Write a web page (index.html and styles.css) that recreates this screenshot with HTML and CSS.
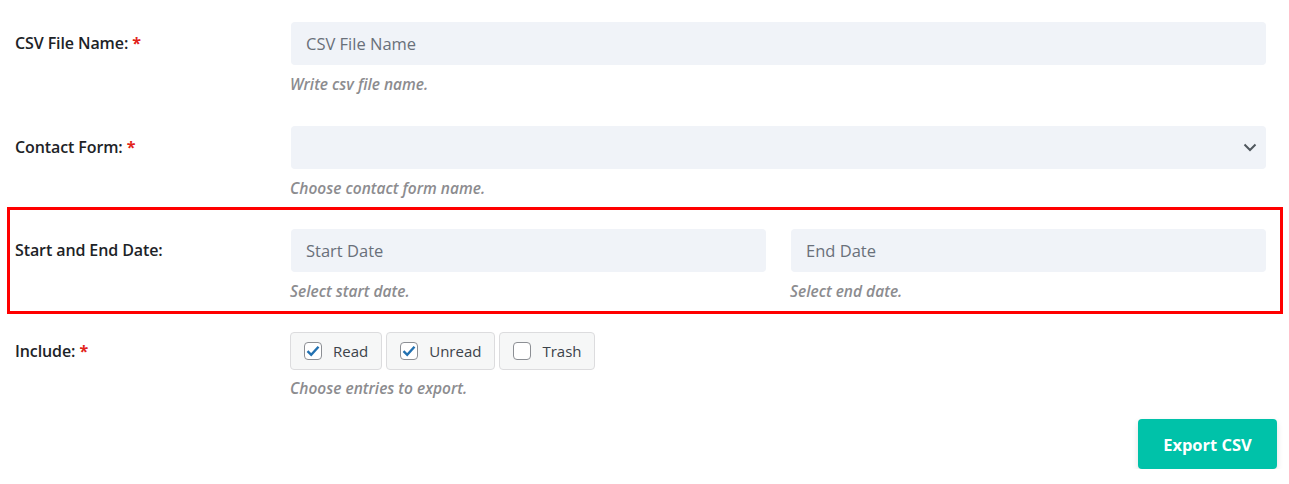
FILE: index.html
```html
<!DOCTYPE html>
<html lang="en">
<head>
<meta charset="utf-8">
<title>Export CSV</title>
<link rel="stylesheet" href="styles.css">
</head>
<body>
<form class="export-form">
  <div class="row">
    <label class="row-label">CSV File Name: <span class="req">*</span></label>
    <div class="row-field">
      <input class="text-input" type="text" placeholder="CSV File Name">
      <p class="help">Write csv file name.</p>
    </div>
  </div>

  <div class="row">
    <label class="row-label">Contact Form: <span class="req">*</span></label>
    <div class="row-field">
      <div class="select-box">
        <svg class="chevron" width="14" height="9" viewBox="0 0 14 9"><path d="M1.5 1.5 L7 7 L12.5 1.5" fill="none" stroke="#50575e" stroke-width="2"/></svg>
      </div>
      <p class="help">Choose contact form name.</p>
    </div>
  </div>

  <div class="row row-highlight">
    <label class="row-label">Start and End Date:</label>
    <div class="row-field date-pair">
      <div class="date-col">
        <input class="text-input" type="text" placeholder="Start Date">
        <p class="help">Select start date.</p>
      </div>
      <div class="date-col">
        <input class="text-input" type="text" placeholder="End Date">
        <p class="help">Select end date.</p>
      </div>
    </div>
  </div>

  <div class="row row-include">
    <label class="row-label label-chips">Include: <span class="req">*</span></label>
    <div class="row-field">
      <div class="chips">
        <label class="chip"><span class="box checked"><svg width="14" height="12" viewBox="0 0 14 12"><path d="M1.5 6.2 L5.2 9.8 L12.5 1.8" fill="none" stroke="#2271b1" stroke-width="2.4"/></svg></span>Read</label>
        <label class="chip"><span class="box checked"><svg width="14" height="12" viewBox="0 0 14 12"><path d="M1.5 6.2 L5.2 9.8 L12.5 1.8" fill="none" stroke="#2271b1" stroke-width="2.4"/></svg></span>Unread</label>
        <label class="chip"><span class="box"></span>Trash</label>
      </div>
      <p class="help help-chips">Choose entries to export.</p>
    </div>
  </div>

  <div class="actions">
    <button type="button" class="export-btn">Export CSV</button>
  </div>
</form>
</body>
</html>
```

FILE: styles.css
```css
* { box-sizing: border-box; }

body {
  margin: 0;
  background: #ffffff;
  font-family: "Open Sans", "Noto Sans", "DejaVu Sans", sans-serif;
  color: #1d2327;
}

.export-form {
  display: flex;
  flex-direction: column;
}

.row {
  display: flex;
  margin: 0 6px 0 7px;
  padding: 22px 17px 9.5px 8px;
}

.row-highlight {
  padding-bottom: 12.5px;
  box-shadow: inset 0 0 0 3px #ff0000;
}

.row-highlight + .row {
  padding-top: 18px;
}

.row-label {
  flex: 0 0 276px;
  font-size: 16px;
  font-weight: 600;
  line-height: 43px;
  letter-spacing: -0.1px;
  color: #1d2327;
}

.req {
  color: #e2231a;
  font-weight: 700;
}

.row-field {
  flex: 1;
  min-width: 0;
}

.text-input,
.select-box {
  display: block;
  width: 100%;
  height: 43px;
  border: 0;
  border-radius: 4px;
  background: #f0f3f8;
  padding: 0 15px;
  font-family: inherit;
  font-size: 16.5px;
  color: #3c434a;
  outline: none;
}

.text-input::placeholder {
  color: #69707a;
  opacity: 1;
}

.select-box {
  position: relative;
  display: flex;
  align-items: center;
  justify-content: flex-end;
  padding-right: 9px;
}

.help {
  margin: 9px 0 0 -1px;
  font-size: 15.5px;
  line-height: 20px;
  font-style: italic;
  font-weight: 600;
  color: #8c8c8f;
}

.date-pair {
  display: flex;
  gap: 25px;
}

.date-col {
  flex: 1;
  min-width: 0;
}

.label-chips {
  line-height: 38px;
}

.chips {
  display: flex;
  gap: 4px;
  margin-left: -1px;
}

.chip {
  display: flex;
  align-items: center;
  height: 38px;
  padding: 0 13px 0 13px;
  border: 1px solid #dcdcde;
  border-radius: 4px;
  background: #f6f7f7;
  font-size: 15px;
  color: #3c434a;
}

.box {
  display: flex;
  align-items: center;
  justify-content: center;
  width: 18px;
  height: 18px;
  margin-right: 11px;
  border: 1px solid #8c8f94;
  border-radius: 4px;
  background: #ffffff;
}

.help-chips {
  margin-top: 8px;
}

.actions {
  display: flex;
  justify-content: flex-end;
  padding: 12px 12px 0 0;
}

.export-btn {
  width: 139px;
  height: 50px;
  border: 0;
  border-radius: 4px;
  background: #00c2a9;
  color: #ffffff;
  font-family: inherit;
  font-size: 16.5px;
  font-weight: 700;
  box-shadow: 0 3px 6px rgba(0, 0, 0, 0.12);
}
```
